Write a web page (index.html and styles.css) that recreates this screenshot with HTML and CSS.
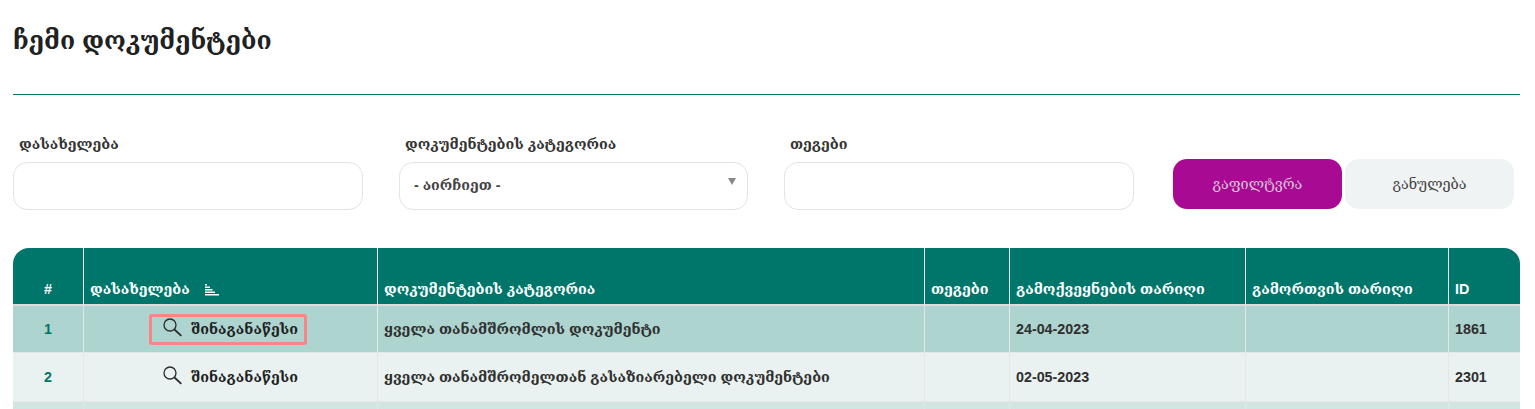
FILE: index.html
```html
<!DOCTYPE html>
<html lang="ka">
<head>
<meta charset="utf-8">
<title>ჩემი დოკუმენტები</title>
<link rel="stylesheet" href="styles.css">
</head>
<body>
<main class="page">
  <h1 class="title">ჩემი დოკუმენტები</h1>
  <form class="filters">
    <div class="field field-name">
      <label class="label">დასახელება</label>
      <input class="control" type="text">
    </div>
    <div class="field field-cat">
      <label class="label">დოკუმენტების კატეგორია</label>
      <div class="control select">- აირჩიეთ -<span class="caret"></span></div>
    </div>
    <div class="field field-tags">
      <label class="label">თეგები</label>
      <input class="control" type="text">
    </div>
    <div class="actions">
      <button class="btn btn-primary" type="button">გაფილტვრა</button>
      <button class="btn btn-reset" type="button">განულება</button>
    </div>
  </form>
  <table class="docs">
    <colgroup>
      <col class="c-num"><col class="c-name"><col class="c-cat"><col class="c-tags"><col class="c-pub"><col class="c-off"><col class="c-id">
    </colgroup>
    <thead>
      <tr>
        <th class="center first">#</th>
        <th>დასახელება
          <svg class="sort" width="14" height="12" viewBox="0 0 14 12"><path d="M0 0h2v1.500H0zM0 2.500h5V4H0zM0 5h7.500v1.500H0zM0 7.500h10V9H0zM0 10h14v1.500H0z" fill="#fff"/></svg>
        </th>
        <th>დოკუმენტების კატეგორია</th>
        <th>თეგები</th>
        <th>გამოქვეყნების თარიღი</th>
        <th>გამორთვის თარიღი</th>
        <th class="last">ID</th>
      </tr>
    </thead>
    <tbody>
      <tr class="row-a">
        <td class="center num">1</td>
        <td class="center"><a class="doc doc-hl"><svg class="lens" width="19" height="19" viewBox="0 0 19 19"><circle cx="7" cy="7" r="6" fill="none" stroke="#2b2b2b" stroke-width="1.300"/><path d="M11.500 11.500L18.300 17.800" stroke="#2b2b2b" stroke-width="1.800" fill="none"/></svg>შინაგანაწესი</a></td>
        <td>ყველა თანამშრომლის დოკუმენტი</td>
        <td></td>
        <td>24-04-2023</td>
        <td></td>
        <td>1861</td>
      </tr>
      <tr class="row-b">
        <td class="center num">2</td>
        <td class="center"><a class="doc"><svg class="lens" width="19" height="19" viewBox="0 0 19 19"><circle cx="7" cy="7" r="6" fill="none" stroke="#2b2b2b" stroke-width="1.300"/><path d="M11.500 11.500L18.300 17.800" stroke="#2b2b2b" stroke-width="1.800" fill="none"/></svg>შინაგანაწესი</a></td>
        <td>ყველა თანამშრომელთან გასაზიარებელი დოკუმენტები</td>
        <td></td>
        <td>02-05-2023</td>
        <td></td>
        <td>2301</td>
      </tr>
      <tr class="row-c"><td></td><td></td><td></td><td></td><td></td><td></td><td></td></tr>
    </tbody>
  </table>
</main>
</body>
</html>
```
FILE: styles.css
```css
* { box-sizing: border-box; }
html, body { margin: 0; height: 409px; overflow: hidden; background: #fff; }
body { font-family: "Liberation Sans", "DejaVu Serif", serif; color: #2f2f2f; }
.page { padding: 0 15px 0 13px; }
.title {
  margin: 0;
  height: 95px;
  padding-top: 26px;
  border-bottom: 1px solid #00766a;
  font-size: 24.800px;
  line-height: 30px;
  font-weight: 700;
  color: #212121;
}
.filters { display: flex; align-items: flex-start; margin-top: 40px; height: 113px; }
.field { display: flex; flex-direction: column; width: 350px; }
.field-cat { width: 349px; margin-left: 36px; }
.field-tags { margin-left: 36px; }
.label { height: 27px; padding-left: 6px; font-size: 14.300px; line-height: 18px; font-weight: 700; color: #333; }
.control {
  display: block;
  width: 100%;
  height: 48px;
  border: 1px solid #e3e3e3;
  border-radius: 14px;
  background: #fff;
  outline: none;
}
.select {
  position: relative;
  padding: 0 14px;
  font-size: 14.200px;
  line-height: 45px;
  font-weight: 700;
  color: #444;
}
.caret {
  position: absolute;
  right: 11px;
  top: 15px;
  border-left: 4px solid transparent;
  border-right: 4px solid transparent;
  border-top: 7px solid #888;
}
.actions { display: flex; gap: 3px; margin: 24px 0 0 39px; }
.btn {
  width: 169px;
  height: 50px;
  border: 0;
  border-radius: 14px;
  font-family: inherit;
  font-size: 14.400px;
  font-weight: 400;
}
.btn-primary { background: #a80a94; color: #d9c4d8; }
.btn-reset { background: #f0f3f4; color: #444; }
.docs {
  width: 1507px;
  table-layout: fixed;
  border-collapse: separate;
  border-spacing: 0;
  font-size: 14.300px;
  font-weight: 700;
}
.c-num { width: 71px; }
.c-name { width: 294px; }
.c-cat { width: 547px; }
.c-tags { width: 85px; }
.c-pub { width: 236px; }
.c-off { width: 203px; }
.c-id { width: 71px; }
.docs th, .docs td {
  padding: 0 6px;
  border-right: 1px solid #e3e8e7;
  text-align: left;
}
.docs th:last-child, .docs td:last-child { border-right: 0; }
.docs th {
  height: 58px;
  padding-top: 26px;
  background: #00766a;
  border-bottom: 2px solid #dcdcdc;
  color: #fff;
  font-size: 14.300px;
  font-weight: 700;
}
.docs th.first { border-top-left-radius: 16px; }
.docs th.last { border-top-right-radius: 16px; }
.docs .center { text-align: center; }
.sort { margin-left: 11px; vertical-align: -2px; }
.docs td { border-bottom: 1px solid #e3e8e7; }
.row-a td { height: 47px; background: #aed4cf; }
.row-b td { height: 49px; background: #e9f2f0; }
.row-c td { height: 40px; background: #d2e5e3; }
.docs .num { color: #00766a; }
.doc {
  display: inline-flex;
  align-items: center;
  gap: 9px;
  height: 31px;
  margin-right: 5px;
  padding: 0 6px 0 11px;
  color: #1f1f1f;
  border: 3px solid transparent;
}
.doc-hl { border-color: #fb8585; border-radius: 3px; }
.lens { margin-top: -4px; }
```
